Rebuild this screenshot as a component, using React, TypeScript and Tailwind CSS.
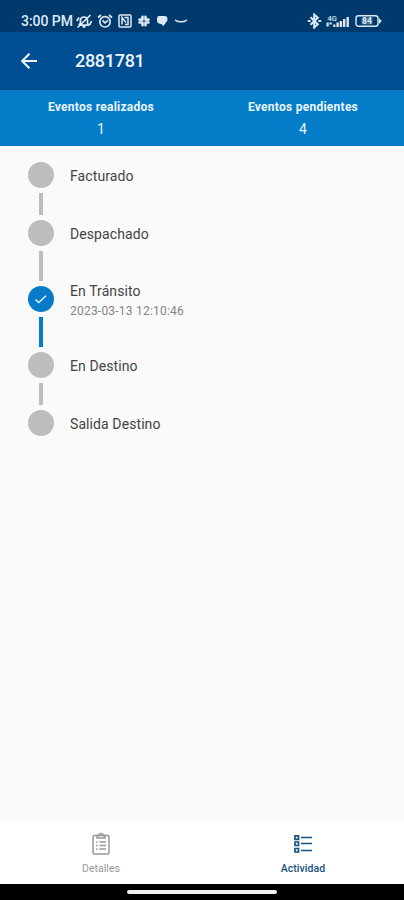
import { ReactNode } from "react";
import { clsx } from "clsx";

type Step = {
  label: string;
  date?: string;
  done?: boolean;
  line?: string;
};

const STEPS: Step[] = [
  { label: "Facturado", line: "h-[22px]" },
  { label: "Despachado", line: "h-[30px]" },
  { label: "En Tránsito", date: "2023-03-13 12:10:46", done: true, line: "h-[30px]" },
  { label: "En Destino", line: "h-[22px]" },
  { label: "Salida Destino" },
];

function StatusBar() {
  return (
    <div className="flex h-8 items-center bg-[#003a6d] pl-[21px] pr-[21px] pt-[10px] text-[#dfe9f5]">
      <span className="w-[54px] whitespace-nowrap text-[14px] font-medium leading-5 tracking-[-0.05px]">3:00 PM</span>
      {/* muted bell */}
      <svg className="h-4 w-[18px]" viewBox="0 0 18 16" fill="none" stroke="currentColor" strokeWidth="1.7">
        <path d="M5 12.200h8.500l-1-2.200V7A3.600 3.600 0 0 0 5.400 7v3L4 12.200M7.500 13.800h3M2.500 14.500 15.500 2M1.800 8 4 4.500M16.500 8 14.800 12" />
      </svg>
      {/* alarm */}
      <svg className="ml-[4px] h-4 w-4" viewBox="0 0 16 16" fill="none" stroke="currentColor" strokeWidth="1.700">
        <circle cx="8" cy="8.800" r="5.200" />
        <path d="M1 4.500 4 2M15 4.500 12 2M5.500 7.500 8 9.800l3-2.500" />
      </svg>
      {/* nfc */}
      <svg className="ml-[4px] h-4 w-4" viewBox="0 0 16 16" fill="none" stroke="currentColor" strokeWidth="1.500">
        <rect x="2" y="2" width="12" height="12" rx="1" />
        <path d="M5 11.500v-7l4 5M7.500 4.500H11v7H8" />
      </svg>
      {/* slack */}
      <svg className="ml-[5px] h-3 w-3" viewBox="0 0 12 12" stroke="currentColor" strokeWidth="2.600" strokeLinecap="round">
        <path d="M4.500 1.700v2.800M1.500 4.600h3M7.500 1.700v2.800M7.500 4.600h3M1.500 7.500h3M4.500 7.500v2.800M7.500 7.500h3M7.500 7.500v2.800" />
      </svg>
      {/* chat */}
      <svg className="ml-[6px] h-3 w-3" viewBox="0 0 12 12" fill="currentColor">
        <path d="M3 1h5.500a3 3 0 0 1 3 3 4.500 4.500 0 0 1-1.800 3.800L7.200 11.200 5.800 9.200 3 8.500A3 3 0 0 1 1 5.500V3.500A2.500 2.500 0 0 1 3 1Z" />
      </svg>
      <svg className="ml-[6px] h-3 w-[14px]" viewBox="0 0 14 12" fill="none" stroke="currentColor" strokeWidth="1.500" strokeLinecap="round">
        <path d="M1.500 5.200c2.500 2.200 8.500 2.200 11 0" />
      </svg>

      <div className="ml-auto flex items-center">
        {/* bluetooth */}
        <svg className="mr-px h-4 w-[15px]" viewBox="0 0 15 16" fill="none" stroke="currentColor" strokeWidth="2">
          <path d="m3.500 4.300 7.300 7-3.600 3.200v-13l3.600 3.200-7.300 7" />
          <path d="M.8 8h2.800M11.400 8h2.800" />
        </svg>
        {/* signal */}
        <svg className="ml-[3px] h-4 w-[27px]" viewBox="0 0 27 16" fill="currentColor">
          <text x="1.500" y="7.500" fontSize="7.500" fontWeight="500" fontFamily="Roboto, sans-serif">4G</text>
          <path d="M.5 9.500h2.200v4H.5zM3.500 9.500h2.200v2H3.500zM7.200 11.500h2.200v2.500H7.200zM10.400 9.500h2.400v4.500h-2.400zM13.700 8h2.400v6h-2.400zM17 6h2.400v8H17zM20.500 4h2.400v10h-2.400z" />
        </svg>
        {/* battery */}
        <svg className="ml-[2px] h-4 w-7" viewBox="0 0 28 16" fill="none" stroke="currentColor">
          <rect x="1" y="2.800" width="22" height="10.400" rx="2.500" strokeWidth="1.400" />
          <path d="M24 5 26.700 8 24 11z" fill="currentColor" stroke="none" />
          <rect x="6.500" y="4.500" width="11" height="7" fill="currentColor" fillOpacity=".3" stroke="none" />
          <text x="12" y="11" textAnchor="middle" fontSize="8.500" fontWeight="700" fontFamily="Roboto, sans-serif" fill="currentColor" stroke="none">84</text>
        </svg>
      </div>
    </div>
  );
}

function Counter({ label, value }: { label: string; value: number }) {
  return (
    <div className="flex flex-1 flex-col items-center pt-[9px] text-[#e9f6ff]">
      <span className="text-[12px] font-bold leading-4 tracking-[0.26px]">{label}</span>
      <span className="mt-1 text-[14px] leading-5">{value}</span>
    </div>
  );
}

function TimelineStep({ label, date, done, line }: Step) {
  return (
    <li className="flex gap-4">
      <div className="flex w-[26px] flex-col items-center">
        <span
          className={clsx(
            "flex size-[26px] items-center justify-center rounded-full",
            done ? "bg-[#087bc8]" : "bg-[#bdbdbd]"
          )}
        >
          {done && (
            <svg className="size-[14px]" viewBox="0 0 14 14" fill="none" stroke="#e9f6ff" strokeWidth="1.400">
              <path d="m1.500 7.500 3.200 3 7.300-6.700" />
            </svg>
          )}
        </span>
        {line && (
          <span className={clsx("my-[5px] w-1", line, done ? "bg-[#087bc8]" : "bg-[#bdbdbd]")} />
        )}
      </div>
      <div className={clsx("flex flex-col justify-center whitespace-nowrap", date ? "h-[29px]" : "h-7")}>
        <p className="text-[14px] leading-5 tracking-[0.09px] text-[#444]">{label}</p>
        {date && <p className="text-[12px] leading-5 tracking-[0.22px] text-[#858585]">{date}</p>}
      </div>
    </li>
  );
}

function NavItem({ label, active, children }: { label: string; active?: boolean; children: ReactNode }) {
  return (
    <button
      type="button"
      className={clsx(
        "flex flex-1 flex-col items-center pt-[10px] text-[10.500px]",
        active ? "font-medium text-[#17527f]" : "text-[#989898]"
      )}
    >
      {children}
      <span className="mt-[5px] leading-4 tracking-[0.05px]">{label}</span>
    </button>
  );
}

export default function App() {
  return (
    <div className="flex h-[900px] w-[404px] flex-col bg-[#fafafa] font-['Roboto',sans-serif]">
      <StatusBar />
      <header className="flex h-[58px] items-center bg-[#004e92] pl-[20px] text-[#eef5fc]">
        <button type="button" aria-label="Volver">
          <svg className="size-[18px]" viewBox="0 0 18 18" fill="none" stroke="currentColor" strokeWidth="2.200">
            <path d="M17 9H2.500M9.500 1.700 2.200 9l7.300 7.300" />
          </svg>
        </button>
        <h1 className="ml-[37px] text-[18px] font-medium leading-6 tracking-[-0.3px]">2881781</h1>
      </header>
      <section className="flex h-14 bg-[#047cc7]">
        <Counter label="Eventos realizados" value={1} />
        <Counter label="Eventos pendientes" value={4} />
      </section>

      <main className="flex-1 pl-7 pt-4">
        <ul>
          {STEPS.map((step) => (
            <TimelineStep key={step.label} {...step} />
          ))}
        </ul>
      </main>

      <nav className="flex h-[62px] bg-white">
        <NavItem label="Detalles">
          <svg className="size-6" viewBox="0 0 24 24" fill="none" stroke="currentColor" strokeWidth="1.500">
            <rect x="4" y="3.500" width="16" height="18.500" rx="1.500" />
            <path d="M8 3.500V6h8V3.500h-2a2 2 0 0 0-4 0zM10.500 10h6.500M10.500 13.500h6.500M10.500 17h6.500M7 10h1.500M7 13.500h1.500M7 17h1.500" />
          </svg>
        </NavItem>
        <NavItem label="Actividad" active>
          <svg className="size-6" viewBox="0 0 24 24" fill="none" stroke="currentColor" strokeWidth="1.700">
            <path d="M4 3.800h3.500v3.500H4zM4 10h3.500v3.500H4zM4 16.500h3.500V20H4z" />
            <path d="M10 5.500h11M10 11.500h11M10 18.500h11" />
          </svg>
        </NavItem>
      </nav>
      <div className="flex h-4 items-center justify-center bg-black">
        <span className="h-1 w-[150px] rounded-full bg-[#f1f1f1]" />
      </div>
    </div>
  );
}
